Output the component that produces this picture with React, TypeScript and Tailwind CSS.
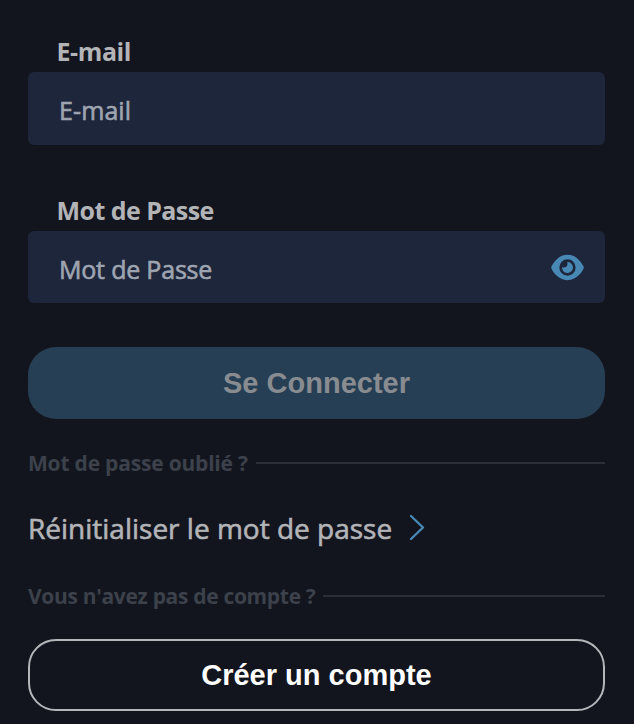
import React, { FC, useState } from 'react'
import { FaEye } from 'react-icons/fa6';

const styles = {
    label: "block pl-[28.5px] h-[42px] leading-[42px] text-[25px] font-bold text-[#b3b4b8]",
    input: "block w-full h-[72.5px] rounded-[6px] bg-[#1e263b] pl-[31px] pr-[70px] pt-[4px] text-[25px] text-[#9ea5b1] placeholder:text-[#9ea5b1] placeholder:opacity-100 outline-none [-webkit-text-stroke:0.6px_#9ea5b1]",
    button: "block w-full h-[72px] pt-[2px] rounded-[28px] text-center text-[29px] font-bold font-['Liberation_Sans',Arial,sans-serif]",
};

type DividerProps = {
    text: string;
    className: string;
}

const Divider:FC<DividerProps> = ({ text, className }) => {
    return (
        <div className="flex items-center h-[30px]">
            <span className={`shrink-0 whitespace-nowrap pt-[2px] text-[21px] font-bold text-[#3c414b] ${className}`}>{text}</span>
            <span className="h-[2px] flex-1 bg-[#2b2e36]" />
        </div>
    )
}

const App:FC = () => {
    const [email, setEmail] = useState("");
    const [password, setPassword] = useState("");
    const [show, setShow] = useState(false);

    return (
        <div className="w-full h-[724px] overflow-hidden bg-[#12151e] pl-[28px] pr-[29px] pt-[30px] font-['Open_Sans','Noto_Sans',sans-serif]">
            <form onSubmit={(e) => e.preventDefault()}>
                <label htmlFor="email" className={`${styles.label} tracking-[-0.4px]`}>E-mail</label>
                <input
                    id="email"
                    type="email"
                    className={`${styles.input} tracking-[0.1px]`}
                    placeholder="E-mail"
                    value={email}
                    onChange={(e) => setEmail(e.target.value)}
                />
                <label htmlFor="password" className={`${styles.label} mt-[44px] tracking-[-0.55px]`}>Mot de Passe</label>
                <div className="relative">
                    <input
                        id="password"
                        type={show ? "text" : "password"}
                        className={`${styles.input} tracking-[-0.2px]`}
                        placeholder="Mot de Passe"
                        value={password}
                        onChange={(e) => setPassword(e.target.value)}
                    />
                    <button type="button" className="absolute right-[21px] top-[22px]" onClick={() => setShow(!show)}>
                        <FaEye className="w-[33px] h-[29px] text-[#4888b5]" />
                    </button>
                </div>
                <button type="submit" className={`${styles.button} mt-[44px] bg-[#273f55] text-[#888c91]`}>
                    Se Connecter
                </button>
            </form>
            <div className="mt-[29px]">
                <Divider text="Mot de passe oublié ?" className="w-[228px] tracking-[-0.2px]" />
            </div>
            <a href="#" className="mt-[30px] flex h-[40px] items-center text-[28px] text-[#b3b4b8]">
                <span className="w-[381px] whitespace-nowrap [-webkit-text-stroke:0.6px_#b3b4b8]">Réinitialiser le mot de passe</span>
                <svg width="16" height="27" viewBox="0 0 16 27" className="-mt-[2px]" fill="none" stroke="#4888b5" strokeWidth="2.4" strokeLinecap="round" strokeLinejoin="round">
                    <path d="M2 2 L14 13.5 L2 25" />
                </svg>
            </a>
            <div className="mt-[33px]">
                <Divider text="Vous n'avez pas de compte ?" className="w-[295px] tracking-[-0.32px]" />
            </div>
            <button type="button" className={`${styles.button} mt-[28px] border-2 border-[#b5b6ba] text-white`}>
                Créer un compte
            </button>
        </div>
    )
}

export default App
